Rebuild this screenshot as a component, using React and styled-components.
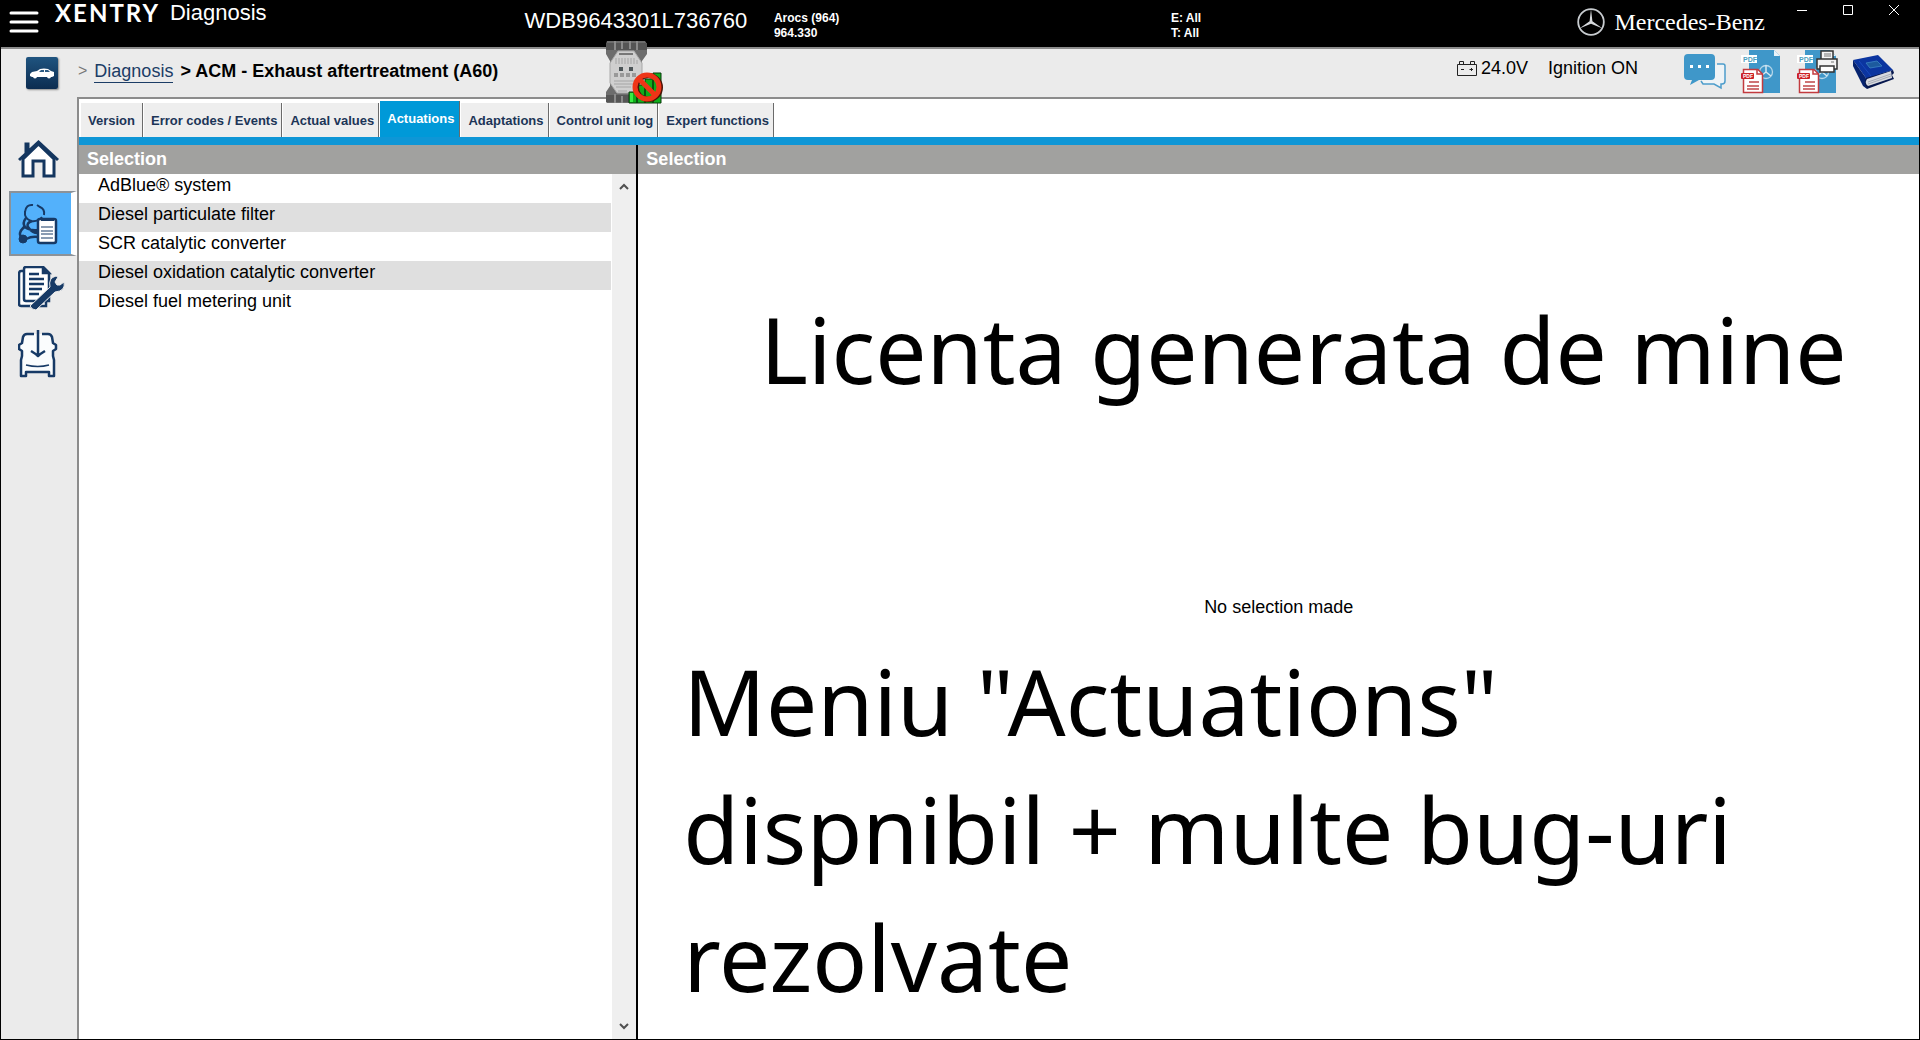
import { useState } from "react";
import styled, { createGlobalStyle } from "styled-components";

const tabs = [
  "Version",
  "Error codes / Events",
  "Actual values",
  "Actuations",
  "Adaptations",
  "Control unit log",
  "Expert functions",
];

const systems = [
  "AdBlue® system",
  "Diesel particulate filter",
  "SCR catalytic converter",
  "Diesel oxidation catalytic converter",
  "Diesel fuel metering unit",
];

export default function App() {
  const [tab, setTab] = useState("Actuations");
  return (
    <Page>
      <GlobalStyle />
      <TopBar>
        <Brand>
          <IconButton aria-label="Menu">
            <MenuIcon />
          </IconButton>
          <Logo>XENTRY</Logo>
          <AppName>Diagnosis</AppName>
        </Brand>
        <Vin>
          WDB9643301L736760
          <Device>
            <DeviceIcon />
          </Device>
        </Vin>
        <Facts>
          Arocs (964)
          <br />
          964.330
        </Facts>
        <Facts>
          E: All
          <br />
          T: All
        </Facts>
        <Maker>
          <StarIcon />
          Mercedes-Benz
        </Maker>
        <WindowButtons>
          <IconButton aria-label="Minimize">
            <WindowIcon d="M0 5.5H10" />
          </IconButton>
          <IconButton aria-label="Maximize">
            <WindowIcon d="M.5.5H9.5V9.5H.5Z" />
          </IconButton>
          <IconButton aria-label="Close">
            <WindowIcon d="M0 0L10 10M10 0L0 10" />
          </IconButton>
        </WindowButtons>
      </TopBar>
      <SubBar>
        <CarTile aria-label="Vehicle">
          <CarIcon />
        </CarTile>
        <Crumbs>
          <span>&gt;</span>
          <a href="#diagnosis">Diagnosis</a>
          <b>&gt; ACM - Exhaust aftertreatment (A60)</b>
        </Crumbs>
        <Status>
          <BatteryIcon />
          <Voltage>24.0V</Voltage>
          <span>Ignition ON</span>
        </Status>
        <Tools>
          <IconButton aria-label="Messages">
            <ChatIcon />
          </IconButton>
          <IconButton aria-label="Save as PDF">
            <PdfIcon />
          </IconButton>
          <IconButton aria-label="Print PDF">
            <PdfIcon printer />
          </IconButton>
          <IconButton aria-label="Manual">
            <BookIcon />
          </IconButton>
        </Tools>
      </SubBar>
      <Body>
        <Sidebar>
          <SideButton aria-label="Home">
            <HomeIcon />
          </SideButton>
          <SideButton aria-label="Control units" $active>
            <StethoscopeIcon />
          </SideButton>
          <SideButton aria-label="Service">
            <WorkshopIcon />
          </SideButton>
          <SideButton aria-label="Truck">
            <TruckIcon />
          </SideButton>
        </Sidebar>
        <Main>
          <Tabs role="tablist">
            {tabs.map((name) => (
              <Tab
                key={name}
                role="tab"
                aria-selected={name === tab}
                $active={name === tab}
                onClick={() => setTab(name)}
              >
                {name}
              </Tab>
            ))}
          </Tabs>
          <Panels>
            <LeftPanel>
              <PanelTitle>Selection</PanelTitle>
              <ListArea>
                <List>
                  {systems.map((name) => (
                    <li key={name}>
                      <Row>{name}</Row>
                    </li>
                  ))}
                </List>
                <ScrollTrack>
                  <IconButton aria-label="Scroll up">
                    <ChevronIcon d="M1 7L5 3L9 7" />
                  </IconButton>
                  <IconButton aria-label="Scroll down">
                    <ChevronIcon d="M1 3L5 7L9 3" />
                  </IconButton>
                </ScrollTrack>
              </ListArea>
            </LeftPanel>
            <RightPanel>
              <PanelTitle>Selection</PanelTitle>
              <Detail>
                <TopNote>Licenta generata de mine</TopNote>
                <Message>No selection made</Message>
                <BottomNote>
                  Meniu "Actuations"
                  <br />
                  dispnibil + multe bug-uri
                  <br />
                  rezolvate
                </BottomNote>
              </Detail>
            </RightPanel>
          </Panels>
        </Main>
      </Body>
    </Page>
  );
}

function MenuIcon() {
  return (
    <svg width="30" height="22" stroke="#fff" strokeWidth="3" strokeLinecap="round">
      <path d="M2 2H28M2 11H28M2 20H28" />
    </svg>
  );
}

function StarIcon() {
  return (
    <svg width="28" height="28" viewBox="0 0 28 28">
      <circle cx="14" cy="14" r="12.8" fill="#000" stroke="#c8ccd0" strokeWidth="1.8" />
      <path d="M14 1L15.4 13.2L25.6 20.6L14 15.8L2.4 20.6L12.6 13.2Z" fill="#d6d9dc" />
    </svg>
  );
}

function WindowIcon({ d }) {
  return (
    <svg width="10" height="10" viewBox="0 0 10 10" fill="none" stroke="#fff">
      <path d={d} />
    </svg>
  );
}

function ChevronIcon({ d }) {
  return (
    <svg width="10" height="10" viewBox="0 0 10 10" fill="none" stroke="#505050" strokeWidth="2">
      <path d={d} />
    </svg>
  );
}

function DeviceIcon() {
  return (
    <svg width="58" height="64" viewBox="0 0 58 64">
      <path d="M2 1H40L42 4V14L37 21V46L42 52V62L40 63H2L1 62V52L5 46V21L1 14V4Z" fill="#6d6d6d" />
      <path d="M1 3H42V10H1ZM1 55H42V62H1Z" fill="#555" />
      <path d="M10 1V10M17 1V9M25 1V9M32 1V10M10 54V63M17 56V63M25 56V63" stroke="#8b8b8b" strokeWidth="2" />
      <path d="M13 11H29L37 23V44L30 53H12L5 43V23Z" fill="#cfcfcf" stroke="#a8a8a8" />
      <path d="M14 14H28" stroke="#777" strokeWidth="2" />
      <path d="M11 18V24M14 18V24M17 18V24M20 18V24M23 18V24M26 18V24M29 18V24M32 20V24" stroke="#a5a5a5" />
      <path d="M14 27H18V31H14ZM24 27H28V31H24Z" fill="#4d5558" />
      <path d="M9 35H33" stroke="#999" strokeWidth="4" strokeDasharray="4 2" />
      <path d="M9 41H32M9 44H28M11 47H26M13 51H22" stroke="#a5a5a5" />
      <path d="M24 52H32V63H24ZM32 45H40V63H32ZM40 39H48V63H40ZM48 33H56V63H48Z" fill="#0fae1b" stroke="#08390b" />
      <path d="M25 53H28V62H25Z" fill="#3bec45" />
      <circle cx="43.5" cy="47.5" r="12" fill="none" stroke="#4b1206" strokeWidth="5" />
      <circle cx="42" cy="47" r="12" fill="none" stroke="#ee3517" strokeWidth="5" />
      <path d="M34 39L50 55" stroke="#ee3517" strokeWidth="5" />
    </svg>
  );
}

function CarIcon() {
  return (
    <svg width="24" height="11" viewBox="0 0 24 11">
      <path d="M0 6L2 4L7 3L10 1Q14 0 18 1L21 3L24 4V8L22 9H2L0 8Z" fill="#fff" />
      <path d="M9 4L11 2H14V4ZM15 2H18L20 4H15Z" fill="#2b5b84" />
      <circle cx="5" cy="8.5" r="2" fill="#fff" />
      <circle cx="19" cy="8.5" r="2" fill="#fff" />
    </svg>
  );
}

function BatteryIcon() {
  return (
    <svg width="20" height="15" viewBox="0 0 20 15" fill="none" stroke="#222">
      <path d="M.5 3.5H19.5V14.5H.5ZM2.5 3V.5H6.5V3M13.5 3V.5H17.5V3M4 8.5H7M12.5 8.5H16M14.5 7V10" />
    </svg>
  );
}

function ChatIcon() {
  return (
    <svg width="42" height="36" viewBox="0 0 42 36">
      <path d="M33 10H39Q41 10 41 12V27Q41 30 38 30H37V34L30 30H19L17 27" fill="#eef3f6" stroke="#4d9dcb" strokeWidth="1.5" />
      <path d="M4 0H27Q31 0 31 4V22Q31 26 27 26H15L6 31L8 26H4Q0 26 0 22V4Q0 0 4 0Z" fill="#3f97c9" />
      <path d="M6 11H9V14H6ZM14 11H17V14H14ZM22 11H25V14H22Z" fill="#fff" />
    </svg>
  );
}

function PdfIcon({ printer }) {
  return (
    <svg width="41" height="44" viewBox="0 0 41 44">
      <path d="M8 0H33L39 6V43H8Z" fill="#3f97c9" />
      <path d="M33 0V6H39Z" fill="#e8f3f9" />
      <circle cx="25" cy="22" r="6.5" fill="none" stroke="#b5d6e9" strokeWidth="1.3" />
      <path d="M25 15V22L30 26M25 22L20 26" fill="none" stroke="#d3e7f2" strokeWidth="1.5" />
      <path d="M0 5H16V13H0Z" fill="#fff" />
      <text x="2" y="12" fontSize="7" fontWeight="bold" fill="#4b9fc0">
        PDF
      </text>
      <path d="M2.5 19.5H17L21.5 24V42.5H2.5Z" fill="#fff" stroke="#c23b3f" strokeWidth="1.5" />
      <path d="M16 19V24H21" fill="none" stroke="#c23b3f" strokeWidth="1.5" />
      <path d="M8 32H18M6 36H18M6 39H18" stroke="#c0474a" strokeWidth="1.4" />
      <rect y="23" width="13" height="6" rx="1" fill="#cc2127" />
      <text x="2" y="28" fontSize="5" fontWeight="bold" fill="#fff">
        PDF
      </text>
      {printer && (
        <g fill="#f4f4f4" stroke="#333" strokeWidth="1.5">
          <path d="M24 9V1H36V9" />
          <path d="M20 9H40V19H20Z" />
          <path d="M23 16H37V22H23Z" fill="#fff" />
          <path d="M27 4H34M27 6H34M34 12H37" fill="none" stroke="#777" strokeWidth="1" />
        </g>
      )}
    </svg>
  );
}

function BookIcon() {
  return (
    <svg width="42" height="34" viewBox="0 0 42 34">
      <path d="M13 22L40 15L41 18L39 20L41 24L14 34L10 29Z" fill="#07184e" />
      <path d="M14 24L38 16L39 23L15 31Q11 28 14 24Z" fill="#d7d9df" />
      <path d="M15 27L38 19M15 29L38 21" stroke="#9b9fab" strokeWidth=".8" />
      <path d="M0 5L25 0L40 15L13 23Z" fill="#0b35a0" />
      <path d="M0 5L13 23Q10 27 14 34L10 31L0 11Z" fill="#06236f" />
      <path d="M13 8L24 6L29 11L17 13Z" fill="#1d5a9e" stroke="#3c84c4" strokeWidth=".8" />
      <path d="M6 6L18 21" stroke="#1748bd" />
    </svg>
  );
}

function HomeIcon() {
  return (
    <svg width="42" height="40" viewBox="0 0 42 40" fill="none" stroke="#14365f" strokeWidth="3">
      <path d="M5 20V37H15V22H26V37H36V20L20.5 5Z" fill="#fff" />
      <path d="M1 21L20.5 3L40 21M8 14V5H10V12" />
    </svg>
  );
}

function StethoscopeIcon() {
  return (
    <svg width="40" height="42" viewBox="0 0 40 42" fill="none" stroke="#173a66" strokeWidth="2.5">
      <path d="M15 2Q8 1 7 9Q6 15 13 18Q20 19 24 14M19 2L22 4Q27 6 26 12" strokeWidth="2" />
      <path d="M8 15Q4 20 7 24Q12 28 20 27M14 18Q8 20 10 24Q14 30 20 30M6 24Q-1 31 4 34M8 36Q14 33 20 34" />
      <circle cx="5" cy="36" r="4" fill="#173a66" strokeWidth="1" />
      <rect x="20" y="16" width="18" height="24" rx="2" fill="#fff" />
      <path d="M24 17H35M24 18V15M28 18V15M32 18V15M35 18V15" strokeWidth="2" />
      <path d="M23 24H35M23 28H35M23 31H35M23 35H35" strokeWidth="1.2" />
    </svg>
  );
}

function WorkshopIcon() {
  return (
    <svg width="48" height="45" viewBox="0 0 48 45" fill="none" stroke="#173a66" strokeWidth="2.5">
      <path d="M5 5H3Q1 5 1 8V38Q1 40 3 40H28V36" fill="#fff" />
      <path d="M8 1H25L31 7V35H8Q6 35 6 33V3Q6 1 8 1Z" fill="#fff" />
      <path d="M25 1V7H31Z" fill="#173a66" />
      <path d="M11 8H21M11 13H26M11 18H26M11 23H24M11 28H21" />
      <path d="M12 40L32 21Q30 12 38 10L40 11L37 16L39 19L42 19L46 16Q48 25 37 26L18 44Q14 44 12 40Z" fill="#173a66" stroke="#ebebeb" strokeWidth="1" />
    </svg>
  );
}

function TruckIcon() {
  return (
    <svg width="40" height="49" viewBox="0 0 40 49" fill="none" stroke="#173a66" strokeWidth="2.5" strokeLinejoin="round">
      <path d="M16 5H9Q6 5 5 8L4 14L1 16V20L4 22V27L3 31V47H8V43H31V47H36V31L35 27V22L38 20V16L35 14L34 8Q33 5 30 5H24" fill="#fafcfd" />
      <path d="M20 1V27M13 22Q18 25 20 27Q22 25 27 22" />
      <path d="M8 36Q20 39 31 36" strokeWidth="1.5" />
    </svg>
  );
}

const GlobalStyle = createGlobalStyle`
  * {
    box-sizing: border-box;
  }
  body {
    margin: 0;
    font-family: "Liberation Sans", Arial, sans-serif;
    font-size: 18px;
    color: #000;
  }
  button {
    font-family: inherit;
  }
  svg {
    display: block;
  }
`;

const Page = styled.div`
  min-height: 100vh;
  display: flex;
  flex-direction: column;
  background: #ebebeb;
  border: 1px solid #000;
  border-top: 0;
`;

const IconButton = styled.button`
  padding: 0;
  border: 0;
  background: none;
  cursor: pointer;
`;

const TopBar = styled.header`
  height: 47px;
  display: grid;
  grid-template-columns: 27.3% 13% 20.7% 1fr auto auto;
  background: #000;
  color: #fff;
`;

const Brand = styled.div`
  display: flex;
  align-items: flex-start;
  padding-left: 8px;
  ${IconButton} {
    margin-top: 11px;
  }
`;

const Logo = styled.span`
  margin-left: 16px;
  font-family: Lato, sans-serif;
  font-size: 24px;
  font-weight: 700;
  line-height: 26px;
  letter-spacing: 2px;
`;

const AppName = styled.span`
  margin-left: 10px;
  font-size: 22px;
  line-height: 26px;
`;

const Vin = styled.div`
  position: relative;
  font-size: 22px;
  line-height: 42px;
`;

/* the multiplexer hangs over both bars */
const Device = styled.div`
  position: absolute;
  z-index: 1;
  top: 40px;
  left: 80px;
`;

const Facts = styled.div`
  padding-top: 11px;
  font-size: 12px;
  font-weight: 700;
  line-height: 15px;
`;

const Maker = styled.div`
  height: 44px;
  display: flex;
  align-items: center;
  gap: 9px;
  font-family: "Liberation Serif", serif;
  font-size: 24px;
`;

const WindowButtons = styled.div`
  display: flex;
  align-items: flex-start;
  gap: 36px;
  padding: 5px 20px 0 32px;
`;

const SubBar = styled.div`
  height: 52px;
  display: flex;
  align-items: flex-start;
  border-top: 2px solid #8c8c8c;
  padding-top: 1px;
`;

const CarTile = styled.button`
  width: 32px;
  height: 32px;
  margin: 7px 20px 0 25px;
  padding: 0;
  display: flex;
  align-items: center;
  justify-content: center;
  border: 0;
  border-radius: 2px;
  background: linear-gradient(#1f5480, #0c2c50);
  box-shadow: 1px 1px 2px #888;
`;

const Crumbs = styled.nav`
  display: flex;
  gap: 7px;
  padding-top: 10px;
  line-height: 22px;
  white-space: nowrap;
  span {
    color: #777;
    font-size: 16px;
  }
  a {
    color: #1c3d66;
    text-decoration: none;
    border-bottom: 1px solid #1c3d66;
  }
`;

const Status = styled.div`
  margin-left: auto;
  display: flex;
  align-items: center;
  padding-top: 7px;
  line-height: 22px;
`;

const Voltage = styled.span`
  margin: 0 20px 0 4px;
`;

const Tools = styled.div`
  height: 44px;
  display: flex;
  align-items: center;
  gap: 15px;
  padding: 0 24px 0 46px;
`;

const Body = styled.div`
  flex: 1;
  display: flex;
`;

const Sidebar = styled.nav`
  width: 76px;
  padding-top: 27px;
  display: flex;
  flex-direction: column;
`;

const SideButton = styled.button`
  height: 65px;
  margin-left: 8px;
  padding: 0 0 0 7px;
  display: flex;
  align-items: center;
  border: 2px solid ${(p) => (p.$active ? "#8b9299" : "transparent")};
  border-right: 6px solid ${(p) => (p.$active ? "#fff" : "transparent")};
  background: ${(p) => (p.$active ? "#53b1fb" : "none")};
  cursor: pointer;
`;

const Main = styled.main`
  flex: 1;
  min-width: 0;
  display: flex;
  flex-direction: column;
  background: #fff;
  border-top: 2px solid #8c8c8c;
  border-left: 2px solid #8c8c8c;
  margin-top: -2px;
`;

const Tabs = styled.div`
  height: 46px;
  display: flex;
  align-items: flex-start;
  gap: 1px;
  padding: 2px 0 0 2px;
  border-bottom: 8px solid #0e96d6;
`;

const Tab = styled.button`
  height: ${(p) => (p.$active ? "36px" : "34px")};
  margin-top: ${(p) => (p.$active ? "0" : "2px")};
  padding: ${(p) => (p.$active ? "0 5px 2px 7px" : "0 4px 0 7px")};
  border: 0;
  border-right: 1px solid #6b6b6b;
  background: ${(p) => (p.$active ? "#0099d8" : "#eee")};
  color: ${(p) => (p.$active ? "#fff" : "#1c3557")};
  font-size: 13px;
  font-weight: 700;
  white-space: nowrap;
  cursor: pointer;
  &:first-child {
    padding-right: 7px;
  }
`;

const Panels = styled.div`
  flex: 1;
  display: flex;
`;

const LeftPanel = styled.section`
  width: 30.4%;
  display: flex;
  flex-direction: column;
  border-right: 2px solid #000;
`;

const RightPanel = styled.section`
  flex: 1;
  min-width: 0;
  display: flex;
  flex-direction: column;
`;

const PanelTitle = styled.h2`
  margin: 0;
  padding: 0 8px;
  background: #a1a19f;
  color: #fff;
  font-size: 18px;
  font-weight: 700;
  line-height: 29px;
`;

const ListArea = styled.div`
  flex: 1;
  display: flex;
`;

const List = styled.ul`
  flex: 1;
  margin: 0;
  padding: 0;
  list-style: none;
  li:nth-child(even) {
    background: #dfdfdf;
  }
`;

const Row = styled.button`
  display: block;
  width: 100%;
  height: 29px;
  padding: 0 19px 7px;
  border: 0;
  background: none;
  color: #000;
  font-size: 18px;
  line-height: 22px;
  text-align: left;
  cursor: pointer;
`;

const ScrollTrack = styled.div`
  width: 25px;
  display: flex;
  flex-direction: column;
  justify-content: space-between;
  align-items: center;
  padding: 8px 0;
  background: #efefef;
  border-left: 1px solid #fff;
`;

const Detail = styled.div`
  flex: 1;
  display: grid;
  grid-template-rows: 1fr auto 1fr;
`;

const Note = styled.p`
  margin: 0;
  font-family: "Noto Sans", sans-serif;
  font-size: 91px;
  line-height: 128px;
`;

const TopNote = styled(Note)`
  padding: 111px 0 0 122px;
`;

const Message = styled.p`
  margin: 0;
  text-align: center;
  line-height: 22px;
`;

const BottomNote = styled(Note)`
  padding: 19px 0 0 45px;
`;
